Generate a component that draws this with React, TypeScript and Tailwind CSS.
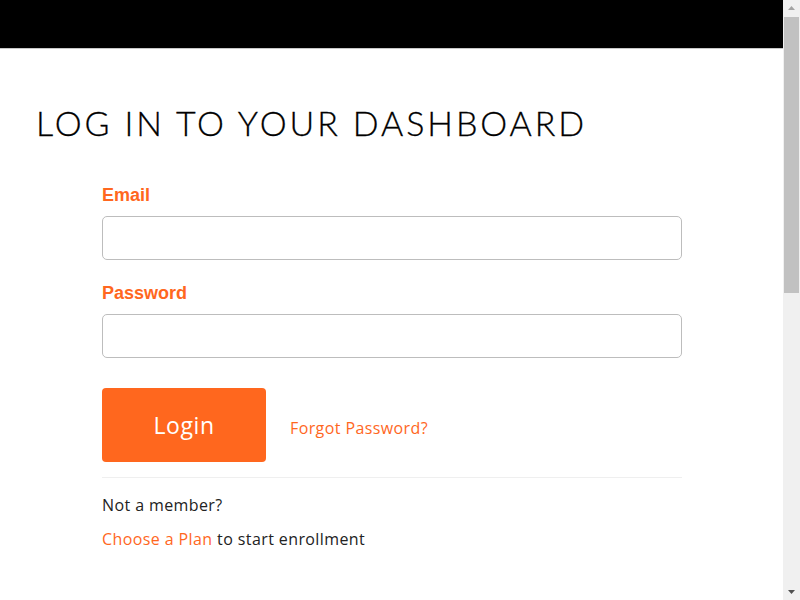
export default function App() {
  return (
    <div className="flex h-screen overflow-hidden bg-white">
      <div className="flex-1 overflow-hidden font-['Open_Sans',sans-serif]">
        <div className="h-[49px] bg-black border-b border-[#c8c8c8]" />

        <div className="px-[36px] pt-[52px]">
          <h1 className="font-['Lato',sans-serif] text-[34px] font-light leading-[44px] tracking-[2.9px] text-black [-webkit-text-stroke:0.3px_black]">
            LOG IN TO YOUR DASHBOARD
          </h1>
        </div>

        <form className="ml-[102px] mt-[39px] w-[580px]">
          <label className="block font-['Liberation_Sans',sans-serif] text-[18px] font-bold leading-[22px] text-[#ff6720]">
            Email
          </label>
          <input
            type="email"
            className="mt-[10px] block h-[44px] w-full rounded-[5px] border border-[#bdbdbd] px-3"
          />

          <label className="mt-[22px] block font-['Liberation_Sans',sans-serif] text-[18px] font-bold leading-[22px] text-[#ff6720]">
            Password
          </label>
          <input
            type="password"
            className="mt-[10px] block h-[44px] w-full rounded-[5px] border border-[#bdbdbd] px-3"
          />

          <div className="mt-[30px] flex items-center">
            <button
              type="button"
              className="h-[74px] w-[164px] rounded-[4px] bg-[#ff671e] text-[23px] tracking-[0.6px] text-white"
            >
              Login
            </button>
            <a className="ml-[24px] mt-[6px] text-[16px] tracking-[0.4px] text-[#ff671e]">Forgot Password?</a>
          </div>

          <div className="mt-[15px] border-t border-[#efefef]" />

          <p className="mt-[17px] text-[16px] leading-[20px] tracking-[0.4px] text-[#222]">Not a member?</p>
          <p className="mt-[14px] text-[16px] leading-[20px] tracking-[0.4px] text-[#222]">
            <a className="text-[#ff671e]">Choose a Plan</a> to start enrollment
          </p>
        </form>
      </div>

      {/* scrollbar */}
      <div className="flex w-[17px] flex-col items-center bg-[#f0f0f0]">
        <svg width="9" height="17" viewBox="0 0 9 17" className="shrink-0">
          <path d="M4.5 6 L8 10 L1 10 Z" fill="#a3a3a3" />
        </svg>
        <div className="h-[276px] w-[15px] bg-[#c1c1c1]" />
        <div className="flex-1" />
        <svg width="9" height="17" viewBox="0 0 9 17" className="shrink-0">
          <path d="M1 7 L8 7 L4.5 11 Z" fill="#505050" />
        </svg>
      </div>
    </div>
  );
}
